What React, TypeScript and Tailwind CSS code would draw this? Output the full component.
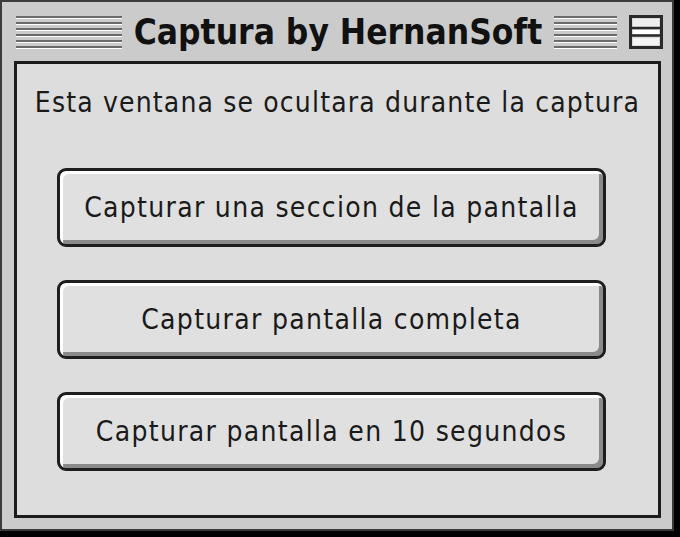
import React from "react";

const body = { fontFamily: '"DejaVu Sans Condensed", "DejaVu Sans", sans-serif' };

function Stripes({ className }: { className: string }) {
  return (
    <div className={`flex flex-col gap-[3px] ${className}`}>
      {[0, 1, 2, 3, 4, 5].map((i) => (
        <div key={i} className="h-[3px] bg-[#6b6b6b] border-b border-white" />
      ))}
    </div>
  );
}

function CollapseBox() {
  return (
    <svg width="34" height="34" viewBox="0 0 34 34" className="shrink-0">
      <rect x="1.5" y="1.5" width="31" height="31" fill="#d8d8d8" stroke="#2a2a2a" strokeWidth="3" />
      <rect x="4" y="4" width="26" height="8" fill="#eeeeee" />
      <line x1="3" y1="13" x2="31" y2="13" stroke="#2a2a2a" strokeWidth="2.5" />
      <rect x="4" y="15" width="26" height="4" fill="#ffffff" />
      <line x1="3" y1="20.5" x2="31" y2="20.5" stroke="#2a2a2a" strokeWidth="2.5" />
      <rect x="4" y="23" width="26" height="7" fill="#f4f4f4" />
    </svg>
  );
}

function MacButton({ label }: { label: string }) {
  return (
    <button
      className="w-[549px] h-[79px] rounded-[9px] border-[3px] border-[#1e1e1e] bg-[#e0e0e0] text-[#1a1a1a] text-[28px] tracking-[1.3px] shadow-[inset_3px_3px_0_#ffffff,inset_-4px_-4px_0_#8a8a8a]"
      style={body}
    >
      {label}
    </button>
  );
}

export default function App() {
  return (
    <div className="w-[680px] h-[537px] bg-black">
      <div className="w-[674px] h-[531px] bg-[#cbcbcb] border-2 border-[#3a3a3a] flex flex-col">
        <div className="h-[59px] flex items-center pl-[14px] pr-[9px] pt-[1px]">
          <Stripes className="w-[106px]" />
          <div
            className="flex-1 text-center text-[35px] font-bold text-[#111] leading-none whitespace-nowrap"
            style={body}
          >
            Captura by HernanSoft
          </div>
          <Stripes className="w-[63px]" />
          <div className="ml-[12px]">
            <CollapseBox />
          </div>
        </div>
        <div className="flex-1 ml-[12px] mr-[11px] mb-[11px] border-[3px] border-[#1c1c1c] bg-[#dddddd] flex flex-col items-center">
          <div className="mt-[22px] text-[28px] leading-[34px] text-[#1a1a1a] tracking-[1.15px] whitespace-nowrap" style={body}>
            Esta ventana se ocultara durante la captura
          </div>
          <div className="mt-[48px] mr-[12px] flex flex-col gap-[33px]">
            <MacButton label="Capturar una seccion de la pantalla" />
            <MacButton label="Capturar pantalla completa" />
            <MacButton label="Capturar pantalla en 10 segundos" />
          </div>
        </div>
      </div>
    </div>
  );
}
